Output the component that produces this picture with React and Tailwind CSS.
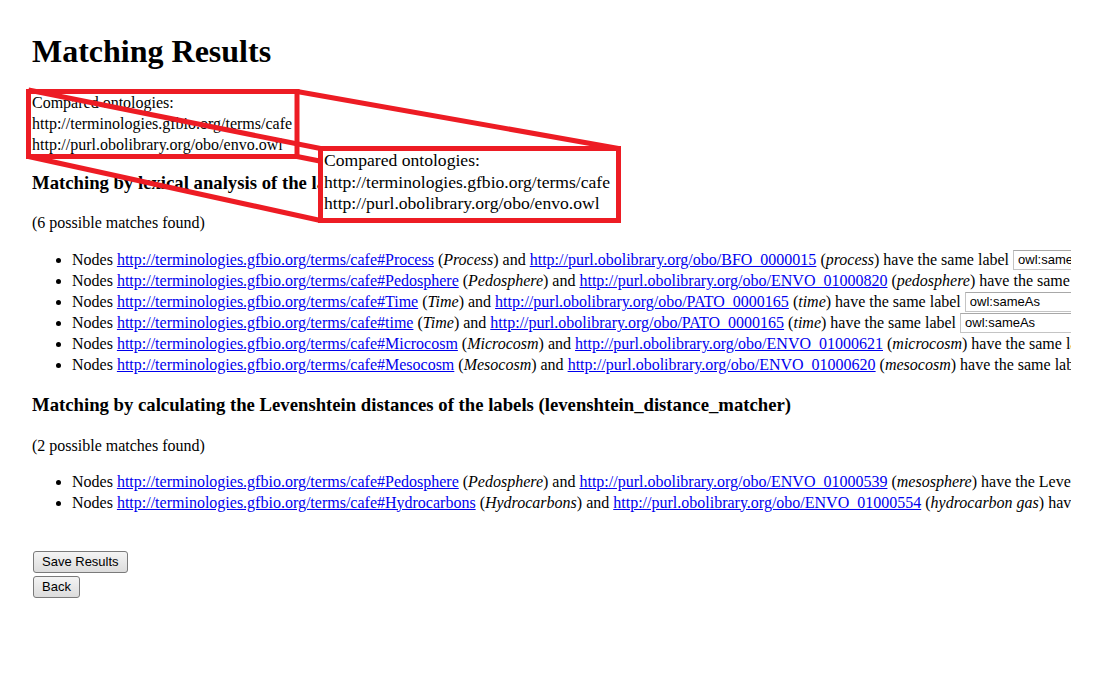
const CAFE = 'http://terminologies.gfbio.org/terms/cafe';
const OBO = 'http://purl.obolibrary.org/obo/';

const lexical = [
  ['Process', 'Process', 'BFO_0000015', 'process'],
  ['Pedosphere', 'Pedosphere', 'ENVO_01000820', 'pedosphere'],
  ['Time', 'Time', 'PATO_0000165', 'time'],
  ['time', 'Time', 'PATO_0000165', 'time'],
  ['Microcosm', 'Microcosm', 'ENVO_01000621', 'microcosm'],
  ['Mesocosm', 'Mesocosm', 'ENVO_01000620', 'mesocosm'],
];

const leven = [
  ['Pedosphere', 'Pedosphere', 'ENVO_01000539', 'mesosphere'],
  ['Hydrocarbons', 'Hydrocarbons', 'ENVO_01000554', 'hydrocarbon gas'],
];

function Link({ href }) {
  return (
    <a href={href} className="text-[#0000ee] underline">
      {href}
    </a>
  );
}

function MatchRow({ row, tail }) {
  const [id, label, target, targetLabel] = row;
  return (
    <li className="h-[21px] leading-[21px]">
      Nodes <Link href={`${CAFE}#${id}`} /> (<i>{label}</i>) and{' '}
      <Link href={`${OBO}${target}`} /> (<i>{targetLabel}</i>) {tail}{' '}
      <input
        readOnly
        value="owl:sameAs"
        className="h-[20px] w-[160px] border border-[#c4c4c4] border-t-[#a8a8a8] px-[4px] align-top mt-[0.5px] font-['Liberation_Sans',sans-serif] text-[13px] text-black"
      />
    </li>
  );
}

function Button({ children }) {
  return (
    <button className="h-[22px] px-2 ml-[1px] rounded-[3px] border border-[#7a7a7a] bg-gradient-to-b from-[#f4f4f4] to-[#dcdcdc] font-['Liberation_Sans',sans-serif] text-[13px] leading-none text-black">
      {children}
    </button>
  );
}

function Callout() {
  return (
    <>
      <svg className="absolute left-0 top-0 pointer-events-none" width="1107" height="691">
        <g stroke="#ed1c24" strokeWidth="5" fill="none">
          <line x1="28.5" y1="90" x2="320.5" y2="148.5" />
          <line x1="297" y1="91.5" x2="618.5" y2="148.5" />
          <line x1="28.5" y1="156.5" x2="320.5" y2="220.5" />
          <line x1="297" y1="156.5" x2="618.5" y2="220.5" />
          <rect x="28.5" y="91.5" width="268.5" height="65" />
        </g>
      </svg>
      <div className="absolute left-[318px] top-[146px] w-[303px] h-[77px] border-[5px] border-[#ed1c24] bg-white overflow-hidden">
        <div className="-mt-[1px] pl-[1px] text-[17.6px] leading-[21.5px] text-black whitespace-nowrap">
          <div>Compared ontologies:</div>
          <div>http://terminologies.gfbio.org/terms/cafe</div>
          <div>http://purl.obolibrary.org/obo/envo.owl</div>
        </div>
      </div>
    </>
  );
}

export default function App() {
  return (
    <div className="relative min-h-[691px] bg-white text-black font-['Liberation_Serif',serif] text-[16px]">
      <div className="pl-8 pt-[33px]">
        <div className="w-[1039px] overflow-hidden">
          <h1 className="text-[32px] font-bold leading-[37px]">Matching Results</h1>

          <div className="mt-[21.5px] leading-[21px]">
            <div>Compared ontologies:</div>
            <div>http://terminologies.gfbio.org/terms/cafe</div>
            <div>http://purl.obolibrary.org/obo/envo.owl</div>
          </div>

          <h3 className="mt-[17px] text-[18.72px] font-bold leading-[22px] whitespace-nowrap">
            Matching by lexical analysis of the labels (lexical_matcher)
          </h3>
          <p className="mt-[18.5px] leading-[21px]">(6 possible matches found)</p>
          <ul className="mt-[16px] pl-10 list-disc whitespace-nowrap">
            {lexical.map((r, i) => (
              <MatchRow key={i} row={r} tail="have the same label" />
            ))}
          </ul>

          <h3 className="mt-[19px] text-[18.72px] font-bold leading-[22px] whitespace-nowrap">
            Matching by calculating the Levenshtein distances of the labels (levenshtein_distance_matcher)
          </h3>
          <p className="mt-[19px] leading-[21px]">(2 possible matches found)</p>
          <ul className="mt-[14.5px] pl-10 list-disc whitespace-nowrap">
            {leven.map((r, i) => (
              <MatchRow key={i} row={r} tail="have the Levenshtein distance of 1 between their labels" />
            ))}
          </ul>

          <div className="mt-[38px] flex flex-col items-start gap-[3px] pb-2">
            <Button>Save Results</Button>
            <Button>Back</Button>
          </div>
        </div>
      </div>
      <Callout />
    </div>
  );
}
